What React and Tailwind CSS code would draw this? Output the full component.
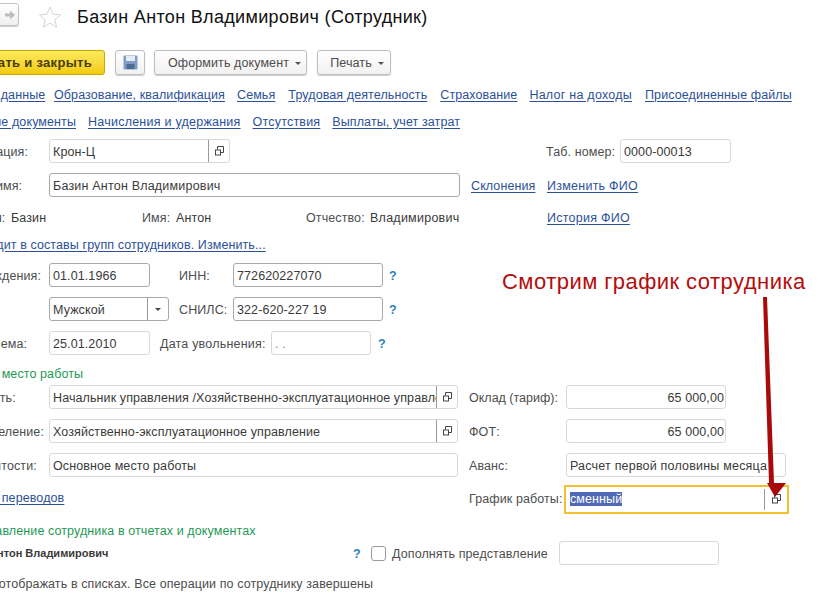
const OpenIcon = () => (
  <svg width="11" height="11" viewBox="0 0 11 11" fill="none" stroke="#444" strokeWidth="1">
    <path d="M3.5 3.5V0.5H9.5V6.5H7" />
    <rect x="1.5" y="4" width="5" height="5" />
  </svg>
);

const Field = ({ w, value, dark, btn, btnW = 21, right, drop, muted, wide }) => (
  <div
    className={`flex h-[24px] shrink-0 items-center rounded-[3px] border bg-white ${dark ? "border-[#a9a9a9]" : "border-[#d9d9d9]"}`}
    style={{ width: w }}
  >
    <span className={`min-w-0 flex-1 overflow-hidden whitespace-nowrap pt-[2px] ${right ? "pr-[1px] pl-[3px] text-right" : "px-[3px]"} ${wide ? "tracking-[0.2px]" : ""} ${muted ? "text-[#888]" : "text-[#3a3a3a]"}`}>
      {value}
    </span>
    {btn && (
      <span className="flex h-full shrink-0 items-center justify-center border-l border-[#9a9a9a]" style={{ width: btnW }}>
        {drop ? <span className="h-0 w-0 border-x-[3px] border-t-[3px] border-x-transparent border-t-[#444]" /> : <OpenIcon />}
      </span>
    )}
  </div>
);

const Label = ({ children }) => (
  <span className="ml-[-4px] w-[101px] shrink-0 whitespace-nowrap pt-[2px] text-[#4d4d4d]">{children}</span>
);

const Q = ({ className = "" }) => <span className={`pt-[2px] font-bold text-[#2f80b8] ${className}`}>?</span>;

const A = ({ children, className = "" }) => (
  <a className={`whitespace-nowrap pt-[2px] text-[#2c5198] underline underline-offset-2 ${className}`}>{children}</a>
);

const Btn = ({ children, w, pad }) => (
  <div
    className={`flex h-[25px] shrink-0 items-center justify-center gap-[6px] rounded-[3px] border border-[#bdbdbd] bg-gradient-to-b from-white to-[#f1f1f1] text-[#4d4d4d] shadow-[0_1px_1px_#ccc] ${pad}`}
    style={{ width: w }}
  >
    <span className="pt-[2px]">{children}</span>
    <span className="mt-[1px] h-0 w-0 border-x-[3px] border-t-[3px] border-x-transparent border-t-[#555]" />
  </div>
);

export default function App() {
  return (
    <div className="relative h-[598px] w-[824px] overflow-hidden bg-white text-[12.5px] leading-[15px] tracking-[0.1px] [font-family:'Liberation_Sans',Arial,sans-serif]">
      <div className="ml-[-48px] flex w-[872px] flex-col">
        {/* header */}
        <div className="flex h-[34px] items-start">
          <div className="mt-[3px] ml-[18px] flex h-[23px] w-[49px] items-center justify-end rounded-[3px] border border-[#c4c4c4] bg-gradient-to-b from-white to-[#f0f0f0] pr-[3px] shadow-[0_1px_1px_#ccc]">
            <svg width="10" height="10" viewBox="0 0 10 10" fill="#bdbdbd"><path d="M0 3.5H5V0.5L10 5L5 9.5V6.5H0Z" /></svg>
          </div>
          <svg className="mt-[5px] ml-[19px]" width="24" height="24" viewBox="0 0 24 24" fill="none" stroke="#d4d4d4" strokeWidth="1">
            <path d="M12 2L15 9.3L22.5 9.9L16.8 14.8L18.6 22.2L12 18.2L5.4 22.2L7.2 14.8L1.5 9.9L9 9.3Z" />
          </svg>
          <h1 className="mt-[7px] ml-[15px] whitespace-nowrap text-[18px] leading-[21px] tracking-[0.33px] text-[#111]">Базин Антон Владимирович (Сотрудник)</h1>
        </div>

        {/* toolbar */}
        <div className="mt-[16px] flex h-[25px] items-center">
          <div className="flex h-[25px] w-[153px] shrink-0 items-center justify-end rounded-[3px] border border-[#c9a800] bg-gradient-to-b from-[#fdea5a] to-[#f2cb00] pr-[12px] text-[13px] font-bold tracking-[0.3px] text-[#4a3c00]">
            Записать и закрыть
          </div>
          <div className="ml-[10px] flex h-[25px] w-[30px] items-center justify-center rounded-[3px] border border-[#bdbdbd] bg-gradient-to-b from-white to-[#f1f1f1] shadow-[0_1px_1px_#ccc]">
            <svg width="15" height="15" viewBox="0 0 15 15">
              <rect x="0.5" y="0.5" width="14" height="14" rx="1" fill="#7f9dc2" />
              <rect x="3" y="1" width="9" height="5" fill="#e4ebf3" />
              <rect x="3.5" y="9" width="8" height="5" fill="#4a6a92" />
            </svg>
          </div>
          <div className="ml-[9px]"><Btn w={153} pad="pl-[8px]">Оформить документ</Btn></div>
          <div className="ml-[10px]"><Btn w={74} pad="pl-[6px]">Печать</Btn></div>
        </div>

        {/* links */}
        <div className="mt-[9px] flex h-[20px] items-center gap-[12px]">
          <A className="w-[90px] text-right">Личные данные</A>
          <A>Образование, квалификация</A>
          <A>Семья</A>
          <A className="ml-[1px]">Трудовая деятельность</A>
          <A className="ml-[1px]">Страхование</A>
          <A className="tracking-[0.25px]">Налог на доходы</A>
          <A className="ml-[1px]">Присоединенные файлы</A>
        </div>
        <div className="mt-[7px] flex h-[20px] items-center gap-[12px]">
          <A className="w-[124px] text-right">Личные документы</A>
          <A className="tracking-[0.24px]">Начисления и удержания</A>
          <A className="tracking-[0.2px]">Отсутствия</A>
          <A>Выплаты, учет затрат</A>
        </div>

        {/* organisation */}
        <div className="mt-[8px] flex h-[24px] items-center">
          <Label>Организация:</Label>
          <Field w={181} value="Крон-Ц" btn />
          <span className="ml-[316px] w-[74px] shrink-0 whitespace-nowrap pt-[2px] text-[#4d4d4d]">Таб. номер:</span>
          <Field w={111} value="0000-00013" />
        </div>

        <div className="mt-[10px] flex h-[24px] items-center">
          <Label>Полное имя:</Label>
          <Field w={411} value="Базин Антон Владимирович" dark wide />
          <A className="ml-[11px] w-[76px]">Склонения</A>
          <A className="tracking-[0.25px]">Изменить ФИО</A>
        </div>

        <div className="mt-[12px] flex h-[16px] items-center">
          <span className="ml-[-4px] w-[63px] shrink-0 pt-[2px] text-[#4d4d4d]">Фамилия:</span>
          <span className="w-[131px] shrink-0 pt-[2px] text-[#3a3a3a]">Базин</span>
          <span className="w-[34px] shrink-0 pt-[2px] text-[#4d4d4d]">Имя:</span>
          <span className="w-[130px] shrink-0 pt-[2px] text-[#3a3a3a]">Антон</span>
          <span className="w-[64px] shrink-0 pt-[2px] text-[#4d4d4d]">Отчество:</span>
          <span className="w-[177px] shrink-0 pt-[2px] tracking-[0.25px] text-[#3a3a3a]">Владимирович</span>
          <A className="tracking-[0.25px]">История ФИО</A>
        </div>

        <div className="mt-[12px] flex h-[16px] items-center">
          <a className="ml-[23px] whitespace-nowrap text-[#2c5198] underline underline-offset-2">Входит в составы групп сотрудников. Изменить...</a>
        </div>

        {/* personal */}
        <div className="mt-[10px] flex h-[24px] items-center">
          <Label>Дата рождения:</Label>
          <Field w={101} value="01.01.1966" dark />
          <span className="ml-[29px] w-[54px] shrink-0 pt-[2px] text-[#4d4d4d]">ИНН:</span>
          <Field w={150} value="772620227070" dark />
          <Q className="ml-[6px]" />
        </div>
        <div className="mt-[10px] flex h-[24px] items-center">
          <Label>Пол:</Label>
          <Field w={120} value="Мужской" dark btn drop />
          <span className="ml-[10px] w-[54px] shrink-0 pt-[2px] text-[#4d4d4d]">СНИЛС:</span>
          <Field w={150} value="322-620-227 19" dark />
          <Q className="ml-[6px]" />
        </div>
        <div className="mt-[10px] flex h-[24px] items-center">
          <Label>Дата приема:</Label>
          <Field w={101} value="25.01.2010" />
          <span className="ml-[10px] w-[111px] shrink-0 whitespace-nowrap pt-[2px] tracking-[0.2px] text-[#4d4d4d]">Дата увольнения:</span>
          <Field w={100} value="  .  ." muted />
          <Q className="ml-[7px]" />
        </div>

        {/* work */}
        <div className="mt-[12px] ml-[-12px] flex h-[14px] items-center whitespace-nowrap text-[#1f9a55]">Основное место работы</div>

        <div className="mt-[4px] flex h-[24px] items-center">
          <Label>Должность:</Label>
          <Field w={409} value="Начальник управления /Хозяйственно-эксплуатационное управление" btn />
          <span className="ml-[11px] w-[97px] shrink-0 pt-[2px] tracking-normal text-[#4d4d4d]">Оклад (тариф):</span>
          <Field w={160} value="65 000,00" right />
        </div>
        <div className="mt-[10px] flex h-[24px] items-center">
          <Label>Подразделение:</Label>
          <Field w={409} value="Хозяйственно-эксплуатационное управление" btn />
          <span className="ml-[11px] w-[97px] shrink-0 pt-[2px] text-[#4d4d4d]">ФОТ:</span>
          <Field w={160} value="65 000,00" right />
        </div>
        <div className="mt-[10px] flex h-[24px] items-center">
          <Label>Вид занятости:</Label>
          <Field w={409} value="Основное место работы" />
          <span className="ml-[11px] w-[97px] shrink-0 pt-[2px] text-[#4d4d4d]">Аванс:</span>
          <Field w={220} value="Расчет первой половины месяца" wide />
        </div>
        <div className="mt-[8px] flex h-[29px] items-center">
          <a className="ml-[-3px] mb-[2px] w-[520px] shrink-0 whitespace-nowrap text-[#2c5198] underline underline-offset-2">История переводов</a>
          <span className="w-[95px] shrink-0 whitespace-nowrap text-[#4d4d4d]">График работы:</span>
          <div className="flex h-[29px] w-[225px] shrink-0 items-center border-2 border-[#f3c12f] bg-white py-[2px] pl-[4px]">
            <span className="flex-1"><span className="bg-[#4f68b8] text-white">сменный</span></span>
            <span className="flex h-full w-[23px] items-center justify-center border-l border-[#9a9a9a]"><OpenIcon /></span>
          </div>
        </div>

        <div className="mt-[10px] ml-[1px] flex h-[14px] items-center whitespace-nowrap text-[#1f9a55]">Представление сотрудника в отчетах и документах</div>

        <div className="mt-[3px] flex h-[24px] items-center">
          <span className="w-[400px] shrink-0 whitespace-nowrap pl-[1px] text-[11px] font-bold tracking-normal text-[#3a3a3a]">Базин Антон Владимирович</span>
          <Q className="w-[19px] shrink-0 pl-[1px]" />
          <span className="h-[15px] w-[15px] shrink-0 rounded-[3px] border border-[#9a9a9a] bg-white" />
          <span className="ml-[6px] w-[167px] shrink-0 whitespace-nowrap pt-[2px] text-[#4d4d4d]">Дополнять представление</span>
          <Field w={160} value="" />
        </div>

        <div className="mt-[12px] flex h-[14px] items-center gap-[12px] whitespace-nowrap text-[#4d4d4d]">
          <span className="h-[15px] w-[15px] shrink-0 rounded-[3px] border border-[#9a9a9a]" />
          <span>Не отображать в списках. Все операции по сотруднику завершены</span>
        </div>
      </div>

      {/* annotation */}
      <div className="absolute left-[502px] top-[269px] whitespace-nowrap text-[22px] leading-[25px] tracking-[0.46px] text-[#b50c0c]">Смотрим график сотрудника</div>
      <svg className="pointer-events-none absolute left-[755px] top-[292px]" width="40" height="212" viewBox="0 0 40 212">
        <path d="M8 5L12 5L19 191L31 191L20 205L12 191L14 191Z" fill="#a80a0a" />
      </svg>
    </div>
  );
}
